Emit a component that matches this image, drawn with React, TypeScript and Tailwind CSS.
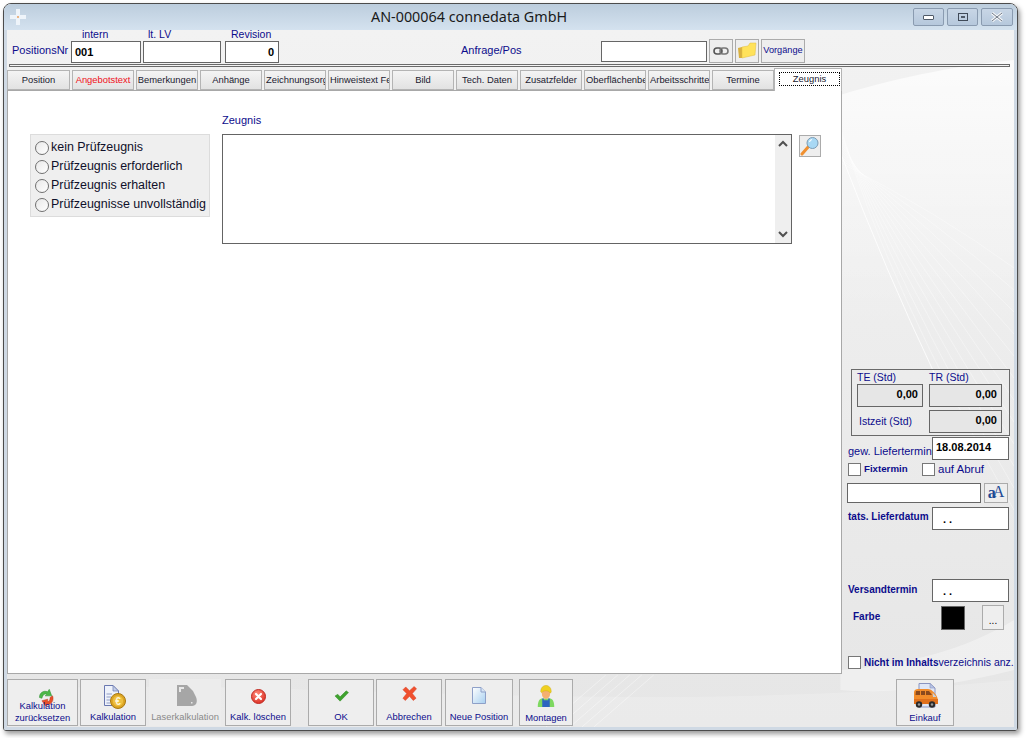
import React from "react";

const Tab = ({ t, red, clip, w = "w-[62px]" }: { t: string; red?: boolean; clip?: boolean; w?: string }) => (
  <div className={`${w} h-[20px] shrink-0 flex items-center pt-[1px] overflow-hidden whitespace-nowrap border border-[#b4b4b4] bg-gradient-to-b from-[#f4f4f4] to-[#e2e2e2] text-[9.4px] ${clip ? "justify-start pl-[1px]" : "justify-center"} ${red ? "text-[#f01020]" : "text-[#1a1a30]"}`}>
    {t}
  </div>
);

const Field = ({ w, h = "h-[22px]", children, cls = "" }: { w: string; h?: string; children?: React.ReactNode; cls?: string }) => (
  <div className={`${w} ${h} shrink-0 border border-[#666] bg-white flex items-center text-[11px] font-bold text-black px-[3px] ${cls}`}>{children}</div>
);

const Radio = ({ t }: { t: string }) => (
  <div className="flex items-center h-[19px]">
    <div className="w-[14px] h-[14px] rounded-full border border-[#707070] bg-gradient-to-br from-[#e8e8e8] to-white ml-[4px] mr-[2px] shrink-0" />
    <span className="text-[12.45px] text-[#10102a] whitespace-nowrap">{t}</span>
  </div>
);

const Check = () => <div className="w-[13px] h-[13px] border border-[#777] bg-white shrink-0" />;

const Tool = ({ w, ml = "ml-[2px]", label, icon, disabled, pb = "pb-[2px]" }: { w: string; ml?: string; label: React.ReactNode; icon: React.ReactNode; disabled?: boolean; pb?: string }) => (
  <div className={`${w} ${ml} h-[47px] shrink-0 relative flex flex-col items-center justify-end ${pb} text-[9.4px] leading-[12px] text-center ${disabled ? "bg-[#ececec] text-[#8a8a8a]" : "bg-[#eeeeee] border border-[#ababab] text-[#0c0c8c]"}`}>
    <div className="absolute left-0 right-0 top-0 flex justify-center">{icon}</div>
    <div className="relative whitespace-nowrap">{label}</div>
  </div>
);

const Refresh = () => (
  <svg width="18" height="19" viewBox="0 0 22 22" className="mt-[8px] ml-[6px]">
    <path d="M3 11 C3 5 8 2 13 4 L15 1 L18 9 L10 9 L12 7 C9 6 7 8 6 12 Z" fill="#4cb848" stroke="#2b8a30" strokeWidth=".6" />
    <path d="M19 9 C21 14 18 20 12 20 L11 22 L6 15 L13 13 L13 16 C15 16 16 14 16 11 Z" fill="#e8502a" stroke="#b83a1a" strokeWidth=".6" />
  </svg>
);
const DocCoin = () => (
  <svg width="22" height="24" viewBox="0 0 22 24" className="mt-[5px] ml-[3px]">
    <path d="M.5 .5 H9 L14.5 6 V20.5 H.5 Z" fill="#eef2fb" stroke="#6a78b0" />
    <path d="M9 .5 V6 H14.5 Z" fill="#c4cfe8" stroke="#6a78b0" strokeWidth=".7" />
    <path d="M2.5 9 H8 M2.5 12 H7 M2.5 15 H6 M2.5 18 H6" stroke="#8f9cc4" strokeWidth="1.2" />
    <circle cx="14" cy="16" r="7.5" fill="#dca524" stroke="#a87810" />
    <circle cx="14" cy="16" r="5.2" fill="#eec040" />
    <text x="14" y="19.5" textAnchor="middle" fontSize="10" fontWeight="bold" fill="#fff6d8" fontFamily="Liberation Sans">€</text>
  </svg>
);
const GreyDoc = () => (
  <svg width="22" height="23" viewBox="0 0 22 23" className="mt-[5px] ml-[3px]">
    <path d="M1 1 H11 L17 7 L20 13 C22 18 20 22 16 22 H1 Z" fill="#a6a6a6" />
    <path d="M3 3 H8 V5 H5 V8 H3 Z" fill="#e8e8e8" />
    <rect x="15" y="18" width="1.5" height="1.5" fill="#e8e8e8" />
  </svg>
);
const RedCircle = () => (
  <svg width="15" height="15" viewBox="0 0 15 15" className="mt-[9px]">
    <defs>
      <radialGradient id="rc" cx=".4" cy=".3" r=".8">
        <stop offset="0" stopColor="#ff8a78" />
        <stop offset="1" stopColor="#d8281e" />
      </radialGradient>
    </defs>
    <circle cx="7.5" cy="7.5" r="7" fill="url(#rc)" stroke="#c02a22" />
    <path d="M5 5 L10 10 M10 5 L5 10" stroke="#fff" strokeWidth="2.2" strokeLinecap="round" />
  </svg>
);
const Tick = () => (
  <svg width="15" height="12" viewBox="0 0 16 14" preserveAspectRatio="none" className="mt-[10px]">
    <path d="M1 7 L4 5 L6.5 8 L13 1 L15.5 3 L6.5 13 Z" fill="#3fa32e" stroke="#2f8a24" strokeWidth=".5" />
  </svg>
);
const RedX = () => (
  <svg width="15" height="15" viewBox="0 0 16 16" className="mt-[6px]">
    <path d="M1 4 L4 1 L8 5 L13 0.5 L15.5 3 L11 8 L15 13 L12 15.5 L8 11 L3.5 15.5 L1 13 L5 8 Z" fill="#f0502e" stroke="#d83a1e" strokeWidth=".5" />
  </svg>
);
const BlueDoc = () => (
  <svg width="14" height="17" viewBox="0 0 14 17" className="mt-[7px]">
    <defs>
      <linearGradient id="bd" x1="0" y1="0" x2="1" y2="1">
        <stop offset="0" stopColor="#ffffff" />
        <stop offset="1" stopColor="#a8d0f0" />
      </linearGradient>
    </defs>
    <path d="M.5 .5 H9 L13.5 5 V16.5 H.5 Z" fill="url(#bd)" stroke="#8ea0c8" />
    <path d="M9 .5 V5 H13.5" fill="#d8e6f6" stroke="#8ea0c8" />
  </svg>
);
const Worker = () => (
  <svg width="18" height="23" viewBox="0 0 24 24" preserveAspectRatio="none" className="mt-[5px]">
    <path d="M1 23 C1 16 4 14 7 14 H17 C20 14 23 16 23 23 Z" fill="#7ed860" />
    <path d="M7 14 H9 V16 H15 V14 H17 V23 H7 Z" fill="#2c64c0" />
    <circle cx="12" cy="9" r="5.5" fill="#f4b070" />
    <path d="M5 7 C5 2 9 0.5 12 0.5 C16 0.5 19 3 19 7 L18 8.5 C15 5.5 10 5 6 8 Z" fill="#f0d020" stroke="#c8a810" strokeWidth=".5" />
  </svg>
);
const Van = () => (
  <svg width="25" height="26" viewBox="0 0 25 26" className="mt-[3px]">
    <path d="M6 .5 H17 L22 5 V24 H6 Z" fill="#dfe6f6" stroke="#8a94c0" />
    <path d="M17 .5 V5 H22 Z" fill="#b8c4e4" stroke="#8a94c0" strokeWidth=".6" />
    <path d="M1 9 C1 7 3 6 5 6 H15 C18 6 21 9 23 12 C24.5 14 25 16 25 19 V21 H1 Z" fill="#f28c2a" />
    <path d="M1 16 H25 V21 H1 Z" fill="#e0701c" />
    <path d="M3 8 H7 V12 H2.5 Z M8 8 H12 V12 H8 Z M13 8 H16 L19 12 H13 Z" fill="#8a4a1e" />
    <path d="M19.5 9.5 L23.5 14 H20 Z" fill="#c8d0d8" />
    <circle cx="6" cy="21.5" r="3.2" fill="#2a2a2a" />
    <circle cx="19" cy="21.5" r="3.2" fill="#2a2a2a" />
    <circle cx="6" cy="21.5" r="1.2" fill="#999" />
    <circle cx="19" cy="21.5" r="1.2" fill="#999" />
  </svg>
);

const fan = [0, 1, 2, 3, 4, 5, 6, 7, 8, 9, 10, 11];

export default function App() {
  return (
    <div className="w-[1026px] h-[738px] bg-white pl-[3px] pt-[3px] font-['Liberation_Sans',Arial,sans-serif]">
      <div className="w-[1015px] h-[728px] rounded-t-[8px] rounded-b-[3px] border border-[#4c4c4c] flex flex-col overflow-hidden shadow-[2px_3px_5px_rgba(0,0,0,0.4)]">
        {/* title bar */}
        <div className="h-[26px] shrink-0 relative flex items-center bg-gradient-to-b from-[#bccddd] to-[#d4e2ef]">
          <svg width="20" height="20" viewBox="0 0 20 20" className="ml-[4px] shrink-0">
            <path d="M8 2 H12 V8 H18 V12 H12 V18 H8 V12 H2 V8 H8 Z" fill="#eef4fa" />
            <circle cx="10" cy="10" r="1" fill="#e8a060" />
          </svg>
          <div className="absolute left-[367px] top-[2px] text-[14.35px] leading-[22px] text-[#1a1a1a] font-['Noto_Sans',sans-serif] whitespace-nowrap">AN-000064 connedata GmbH</div>
          <div className="ml-auto mr-[4px] flex gap-[3px]">
            {[
              <div key="a" className="w-[11px] h-[5px] rounded-[1px] border border-[#505a68] bg-white" />,
              <div key="b" className="w-[10px] h-[8px] border border-[#404a58] flex items-center justify-center"><div className="w-[4px] h-[2px] bg-[#505a68]" /></div>,
              <svg key="c" width="12" height="10" viewBox="0 0 12 10"><path d="M1 1 L11 9 M11 1 L1 9" stroke="#f4f6f8" strokeWidth="3" /><path d="M1 1 L11 9 M11 1 L1 9" stroke="#707a88" strokeWidth="1" /></svg>,
            ].map((x, i) => (
              <div key={i} className={`${i === 2 ? "w-[32px]" : "w-[31px]"} h-[18px] rounded-[2px] border border-[#8a9bb0] bg-gradient-to-b from-[#c8d6e6] to-[#b6c8dc] flex items-center justify-center`}>{x}</div>
            ))}
          </div>
        </div>

        {/* client */}
        <div className="flex-1 relative border-x-[3px] border-b-[3px] border-[#cfd9e4] bg-gradient-to-b from-[#f2f2f2] via-[#ececec] to-[#e6e6e6] flex flex-col min-h-0">
          <svg className="absolute inset-0 w-full h-full" viewBox="0 0 1009 697" preserveAspectRatio="none">
            <defs>
              <linearGradient id="sw" x1="0" y1="0" x2="0" y2="1">
                <stop offset="0" stopColor="#ffffff" stopOpacity=".75" />
                <stop offset="1" stopColor="#ffffff" stopOpacity="0" />
              </linearGradient>
            </defs>
            <path d="M835 65 C 900 45, 960 35, 1009 30 V 300 H 835 Z" fill="url(#sw)" />
            {fan.map((i) => (
              <path key={i} d={`M836 ${100 + i * 3} Q ${880 + i * 5} ${250 - i * 6}, 1009 ${480 - i * 22}`} fill="none" stroke="#ffffff" strokeOpacity=".45" strokeWidth=".8" />
            ))}
            <path d="M836 125 Q 880 240, 930 345" fill="none" stroke="#ffffff" strokeOpacity=".8" strokeWidth="1" />
            <path d="M835 640 C 900 635, 960 620, 1009 590 V 640 C 950 655, 880 665, 835 660 Z" fill="#ffffff" opacity=".35" />
            <path d="M0 660 C 300 645, 600 690, 1009 650 V 697 H 0 Z" fill="#ffffff" opacity=".18" />
            {[0, 1, 2, 3, 4].map((i) => (
              <path key={i} d={`M${540 + i * 12} 697 L${600 + i * 12} 645`} stroke="#ffffff" strokeOpacity=".5" strokeWidth=".8" />
            ))}
          </svg>

          {/* header */}
          <div className="relative h-[34px] shrink-0 flex items-start">
            <div className="w-[64px] pl-[5px] pt-[13px] text-[11px] leading-[14px] text-[#0c0c8c] whitespace-nowrap">PositionsNr</div>
            <div className="w-[72px] flex flex-col">
              <div className="h-[11px] text-[10.5px] leading-[9px] text-[#0c0c8c] pl-[11px] whitespace-nowrap">intern</div>
              <Field w="w-[70px]" cls="text-[11px]">001</Field>
            </div>
            <div className="w-[82px] flex flex-col">
              <div className="h-[11px] text-[10.5px] leading-[9px] text-[#0c0c8c] pl-[5px] whitespace-nowrap">lt. LV</div>
              <Field w="w-[78px]" />
            </div>
            <div className="w-[236px] flex flex-col">
              <div className="h-[11px] text-[10.5px] leading-[9px] text-[#0c0c8c] pl-[6px] whitespace-nowrap">Revision</div>
              <Field w="w-[54px]" cls="justify-end !pr-[4px]">0</Field>
            </div>
            <div className="w-[140px] pt-[13px] text-[11px] leading-[14px] text-[#0c0c8c] whitespace-nowrap">Anfrage/Pos</div>
            <div className="w-[108px] pt-[11px]"><Field w="w-[106px]" h="h-[21px]" /></div>
            <div className="flex gap-[2px] pt-[9px]">
              <div className="w-[24px] h-[24px] border border-[#ababab] bg-[#eeeeee] flex items-center justify-center">
                <svg width="16" height="8" viewBox="0 0 16 8"><rect x="1" y="1" width="8" height="6" rx="3" fill="none" stroke="#555" strokeWidth="1.6" /><rect x="7" y="1" width="8" height="6" rx="3" fill="none" stroke="#777" strokeWidth="1.6" /></svg>
              </div>
              <div className="w-[24px] h-[24px] border border-[#ababab] bg-[#eeeeee] flex items-center justify-center">
                <svg width="20" height="18" viewBox="0 0 20 18"><path d="M1 6 L5 5 L5 16 L2 16 Z" fill="#d8b040" /><path d="M5 5 L11 4 L13 1 L19 1 L18 13 L5 16 Z" fill="#ffe25a" stroke="#e0bc40" strokeWidth=".5" /></svg>
              </div>
              <div className="w-[44px] h-[24px] border border-[#ababab] bg-[#eeeeee] flex items-center justify-center text-[9.2px] text-[#0c0c8c]">Vorgänge</div>
            </div>
          </div>

          {/* separator */}
          <div className="relative h-[3px] shrink-0 ml-[2px] w-[1001px] border border-[#6a6a6a] bg-[#f4f4f4]" />

          {/* main */}
          <div className="relative flex-1 flex min-h-0">
            {/* left */}
            <div className="w-[835px] shrink-0 flex flex-col">
              <div className="h-[23px] shrink-0 flex items-end gap-[2px] relative z-10">
                <Tab t="Position" w="w-[63px]" />
                <Tab t="Angebotstext" red />
                <Tab t="Bemerkungen" />
                <Tab t="Anhänge" />
                <Tab t="Zeichnungsorg" clip />
                <Tab t="Hinweistext Fe" clip />
                <Tab t="Bild" />
                <Tab t="Tech. Daten" />
                <Tab t="Zusatzfelder" />
                <Tab t="Oberflächenbeh" clip />
                <Tab t="Arbeitsschritte" clip />
                <Tab t="Termine" />
                <div className="w-[68px] h-[23px] -ml-[2px] mb-[-1px] shrink-0 border border-b-0 border-[#b4b4b4] bg-white pt-[3px] pl-[4px] pr-[1px]">
                  <div className="h-[14px] border border-dotted border-black flex items-center justify-center text-[9.4px] text-[#1a1a30]">Zeugnis</div>
                </div>
              </div>
              <div className="flex-1 min-h-0 border border-[#a8a8a8] bg-white flex items-start">
                <div className="ml-[22px] mt-[43px] w-[180px] h-[83px] shrink-0 border border-[#dcdcdc] bg-[#efefef] pt-[3px]">
                  <Radio t="kein Prüfzeugnis" />
                  <Radio t="Prüfzeugnis erforderlich" />
                  <Radio t="Prüfzeugnis erhalten" />
                  <Radio t="Prüfzeugnisse unvollständig" />
                </div>
                <div className="ml-[12px] mt-[21px] flex flex-col">
                  <div className="h-[22px] pt-[1px] text-[11px] leading-[14px] text-[#0c0c8c]">Zeugnis</div>
                  <div className="w-[570px] h-[110px] border border-[#646464] bg-white flex justify-end">
                    <div className="w-[16px] h-full bg-[#efefef] flex flex-col justify-between items-center py-[5px]">
                      <svg width="10" height="7" viewBox="0 0 10 7"><path d="M1 6 L5 2 L9 6" fill="none" stroke="#505050" strokeWidth="2" /></svg>
                      <svg width="10" height="7" viewBox="0 0 10 7"><path d="M1 1 L5 5 L9 1" fill="none" stroke="#505050" strokeWidth="2" /></svg>
                    </div>
                  </div>
                </div>
                <div className="ml-[7px] mt-[44px] w-[22px] h-[22px] border border-[#ababab] bg-[#eeeeee] flex items-center justify-center">
                  <svg width="20" height="20" viewBox="0 0 20 20">
                    <path d="M2 18 L9 10" stroke="#f09030" strokeWidth="3" strokeLinecap="round" />
                    <circle cx="12.5" cy="7" r="5.5" fill="#a8d8f4" stroke="#7c9cb4" />
                    <path d="M9.5 6 A3 3 0 0 1 12 3.5" stroke="#fff" strokeWidth="1.2" fill="none" />
                  </svg>
                </div>
              </div>
            </div>

            {/* right */}
            <div className="flex-1 flex flex-col pt-[302px] text-[#0c0c8c] text-[10.5px]">
              <div className="ml-[9px] w-[159px] h-[67px] shrink-0 border border-[#6a6a6a] px-[5px]">
                <div className="flex h-[14px] leading-[14px] text-[10.5px]"><span className="w-[72px]">TE (Std)</span><span>TR (Std)</span></div>
                <div className="flex gap-[6px]">
                  <Field w="w-[66px]" h="h-[23px]" cls="justify-end !bg-[#e6e6e6] pb-[2px] !pr-[4px]">0,00</Field>
                  <Field w="w-[73px]" h="h-[23px]" cls="justify-end !bg-[#e6e6e6] pb-[2px] !pr-[4px]">0,00</Field>
                </div>
                <div className="flex gap-[6px] mt-[3px] items-center">
                  <span className="w-[66px] pl-[2px] whitespace-nowrap">Istzeit (Std)</span>
                  <Field w="w-[73px]" h="h-[23px]" cls="justify-end !bg-[#e6e6e6] pb-[3px] !pr-[4px]">0,00</Field>
                </div>
              </div>
              <div className="flex items-start mt-[1px] ml-[6px]">
                <span className="w-[84px] pt-[7px] text-[11px] leading-[14px] whitespace-nowrap">gew. Liefertermin</span>
                <Field w="w-[77px]" h="h-[23px]" cls="pb-[3px]">18.08.2014</Field>
              </div>
              <div className="flex items-center mt-[3px] ml-[6px] h-[13px]">
                <Check />
                <span className="ml-[3px] w-[58px] font-bold text-[9.7px] whitespace-nowrap">Fixtermin</span>
                <Check />
                <span className="ml-[3px] text-[11.5px] whitespace-nowrap">auf Abruf</span>
              </div>
              <div className="flex items-center mt-[7px] ml-[5px]">
                <Field w="w-[134px]" h="h-[20px]" />
                <div className="ml-[3px] w-[24px] h-[20px] border border-[#ababab] bg-[#eeeeee] flex items-center justify-center font-['Liberation_Serif',serif] font-bold text-[#1c4a94] leading-none">
                  <span className="text-[16px]">a</span><span className="text-[16px] font-normal -ml-[3px] -mt-[3px]">A</span>
                </div>
              </div>
              <div className="flex items-start mt-[4px] ml-[6px]">
                <span className="w-[84px] pt-[3px] font-bold text-[10px] leading-[14px] whitespace-nowrap">tats. Lieferdatum</span>
                <Field w="w-[77px]" h="h-[23px]" cls="!pl-[10px] pt-[2px]">. .</Field>
              </div>
              <div className="flex items-center mt-[49px] ml-[6px]">
                <span className="w-[84px] font-bold text-[10px] pb-[2px] whitespace-nowrap">Versandtermin</span>
                <Field w="w-[77px]" h="h-[23px]" cls="!pl-[10px] pt-[2px]">. .</Field>
              </div>
              <div className="flex items-center mt-[3px] ml-[11px]">
                <span className="w-[88px] font-bold text-[10px] pb-[2px]">Farbe</span>
                <div className="w-[24px] h-[24px] bg-black border border-[#666]" />
                <div className="ml-[17px] w-[22px] h-[25px] border border-[#ababab] bg-[#eeeeee] flex items-end justify-center text-[10px] text-black leading-[16px]">...</div>
              </div>
              <div className="flex items-center mt-[25px] ml-[6px]">
                <Check />
                <span className="ml-[3px] font-bold text-[10px] whitespace-nowrap">Nicht im Inhalts<span className="font-normal text-[10.5px]">verzeichnis anz.</span></span>
              </div>
            </div>
          </div>

          {/* toolbar */}
          <div className="relative h-[53px] shrink-0 flex items-start pt-[5px]">
            <Tool w="w-[71px]" ml="" icon={<Refresh />} pb="pb-[1px]" label={<>Kalkulation<br />zurücksetzen</>} />
            <Tool w="w-[66px]" icon={<DocCoin />} label="Kalkulation" />
            <Tool w="w-[72px]" ml="ml-[3px]" disabled icon={<GreyDoc />} label="Laserkalkulation" pb="pb-[3px]" />
            <Tool w="w-[66px]" ml="ml-[4px]" icon={<RedCircle />} label="Kalk. löschen" />
            <Tool w="w-[66px]" ml="ml-[17px]" icon={<Tick />} label="OK" />
            <Tool w="w-[66px]" icon={<RedX />} label="Abbrechen" />
            <Tool w="w-[68px]" ml="ml-[3px]" icon={<BlueDoc />} label="Neue Position" />
            <Tool w="w-[54px]" ml="ml-[6px]" icon={<Worker />} label="Montagen" pb="pb-[1px]" />
            <Tool w="w-[58px]" ml="ml-[323px]" icon={<Van />} label="Einkauf" pb="pb-[1px]" />
          </div>
        </div>
      </div>
    </div>
  );
}
